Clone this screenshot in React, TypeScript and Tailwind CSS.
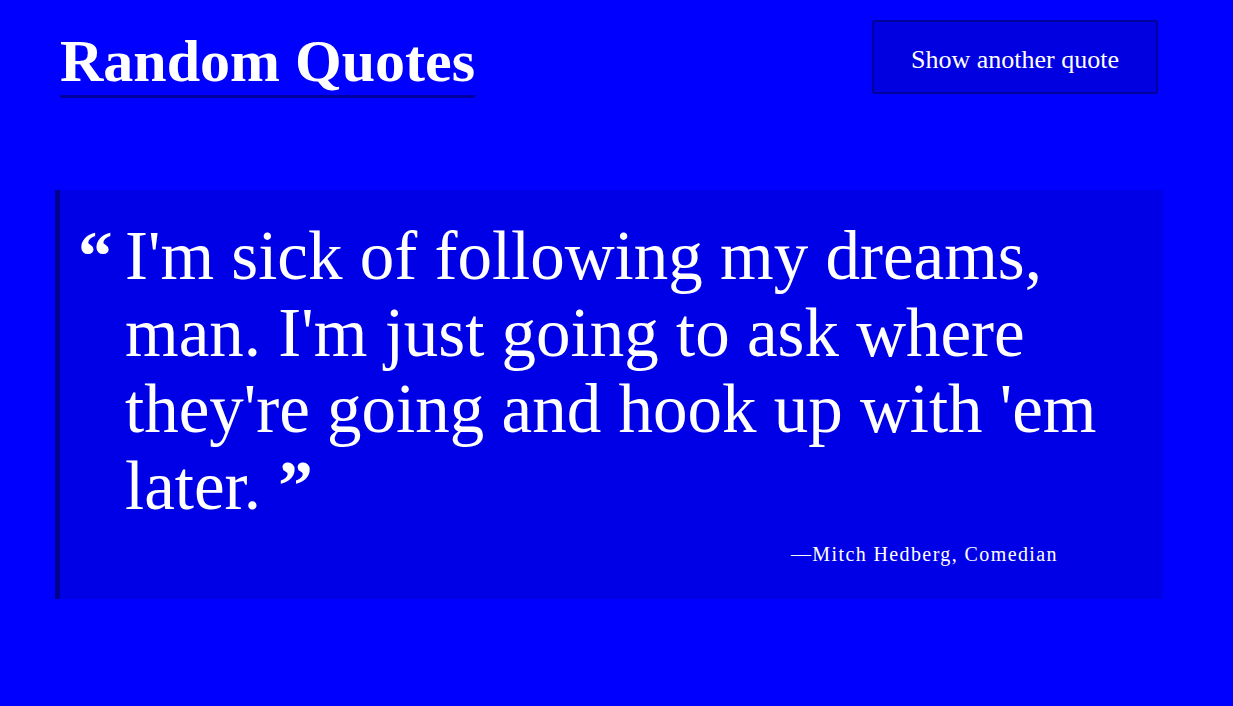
export default function App() {
  const quote = {
    text: "I'm sick of following my dreams, man. I'm just going to ask where they're going and hook up with 'em later.",
    author: 'Mitch Hedberg',
    role: 'Comedian',
  };

  return (
    <div className="min-h-screen bg-[#0000ff] text-white font-['Liberation_Serif',serif]">
      <div className="pl-[55px] pr-[70px] pt-[20px]">
        <header className="flex items-start justify-between">
          <h1 className="ml-[5px] mt-[7px] inline-block border-b-[3px] border-[#0000a0] text-[60px] font-bold leading-[68px]">
            Random Quotes
          </h1>
          <button className="mr-[5px] h-[74px] w-[286px] rounded-[3px] border-2 border-[#00009a] bg-[#0000e0] pt-[6px] text-[26px] leading-none text-white">
            Show another quote
          </button>
        </header>

        <blockquote className="mt-[92px] border-l-[5px] border-[#000090] bg-[#0000e6] pl-[65px] pr-[40px] pt-[28px] pb-[31px]">
          <p className="relative text-[69px] leading-[76.5px]">
            <span className="absolute left-[-47px] top-0 font-bold">&ldquo;</span>
            {quote.text}&nbsp;<span className="font-bold">&rdquo;</span>
          </p>
          <footer className="mr-[65px] mt-[16px] text-right text-[20px] leading-[28px] tracking-[1.4px]">
            &mdash;{quote.author}, {quote.role}
          </footer>
        </blockquote>
      </div>
    </div>
  );
}
